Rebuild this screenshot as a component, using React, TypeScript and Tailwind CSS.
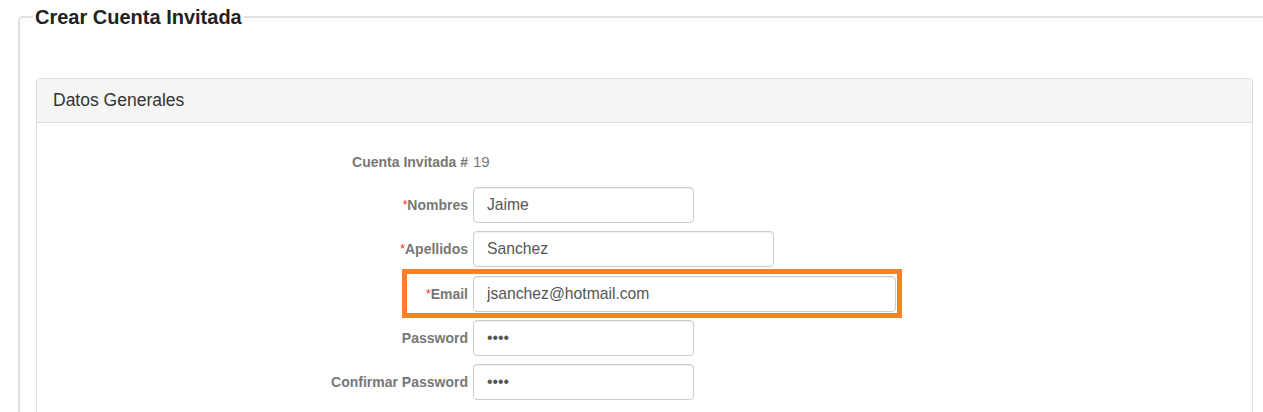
import React from 'react';

interface Field {
  label: string;
  required?: boolean;
  value: string;
  width: string;
  password?: boolean;
  highlight?: boolean;
}

const FIELDS: Field[] = [
  { label: 'Nombres', required: true, value: 'Jaime', width: 'w-[221px]' },
  { label: 'Apellidos', required: true, value: 'Sanchez', width: 'w-[301px]' },
  { label: 'Email', required: true, value: 'jsanchez@hotmail.com', width: 'w-[423px]', highlight: true },
  { label: 'Password', value: '1234', width: 'w-[221px]', password: true },
  { label: 'Confirmar Password', value: '1234', width: 'w-[221px]', password: true },
];

const App: React.FC = () => {
  return (
    <div className="w-[1263px] h-[412px] overflow-hidden bg-white font-['Liberation_Sans',Arial,sans-serif] text-[14px] text-[#333]">
      <fieldset className="ml-[18px] mt-[6px] w-[1300px] border-2 border-[#e2e2e2] rounded-[5px] pl-[16px] pt-[50px]">
        <legend className="-ml-[3px] px-[2px] text-[20px] font-bold leading-[22px] text-[#222]">Crear Cuenta Invitada</legend>

        <div className="w-[1217px] border border-[#dddddd] rounded-[4px]">
          {/* Panel heading */}
          <div className="bg-[#f5f5f5] border-b border-[#dddddd] rounded-t-[4px] px-[16px] py-[11px] text-[17.5px] leading-[21px] text-[#333]">
            Datos Generales
          </div>

          {/* Panel body */}
          <div className="pt-[29px] pb-[20px] flex flex-col gap-[8px]">
            <div className="flex items-center h-[20px] mb-[7px]">
              <div className="w-[431px] text-right text-[14px] font-bold text-[#777]">Cuenta Invitada #</div>
              <div className="ml-[5px] text-[15px] text-[#777]">19</div>
            </div>

            {FIELDS.map(f => (
              <div key={f.label} className={`relative flex items-center h-[36px] ${f.highlight ? 'mt-[1px]' : ''}`}>
                <label className="w-[431px] text-right text-[14px] font-bold text-[#777]">
                  {f.required && <sup className="text-[12px] font-normal text-[#ff2020] relative top-[-1px]">*</sup>}
                  {f.label}
                </label>
                <input
                  readOnly
                  type={f.password ? 'password' : 'text'}
                  value={f.value}
                  className={`ml-[5px] ${f.width} h-[36px] px-[13px] border border-[#cccccc] rounded-[4px] text-[15.7px] text-[#555] shadow-[inset_0_1px_1px_rgba(0,0,0,0.075)] outline-none`}
                />
                {f.highlight && (
                  <div className="absolute left-[365px] top-[-7px] w-[500px] h-[49px] border-[5px] border-[#ff7f27] pointer-events-none" />
                )}
              </div>
            ))}
          </div>
        </div>
      </fieldset>
    </div>
  );
};

export default App;
